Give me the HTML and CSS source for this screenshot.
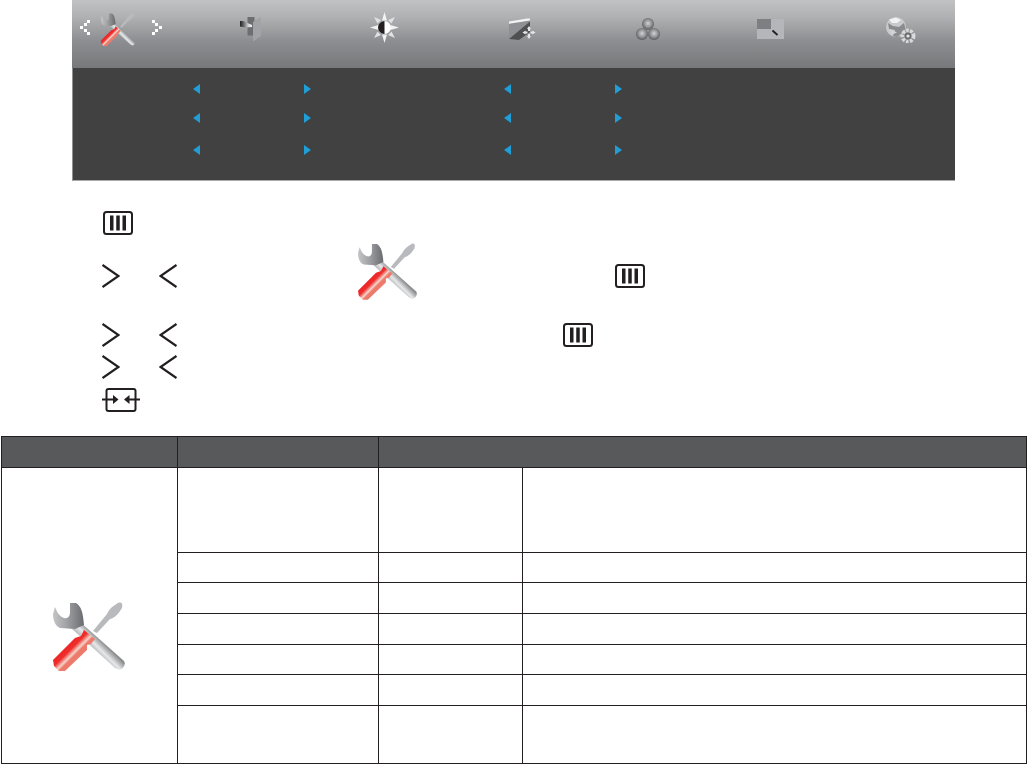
FILE: index.html
```html
<!DOCTYPE html>
<html lang="en">
<head>
  <meta charset="UTF-8">
  <meta name="viewport" content="width=device-width, initial-scale=1.0">
  <title>OSD Setup</title>
  <link rel="stylesheet" href="styles.css">
</head>
<body>
  <!-- shared icons -->
  <svg class="icon-defs" aria-hidden="true">
    <defs>
      <linearGradient id="wrench-head" gradientUnits="userSpaceOnUse" x1="0" y1="12" x2="30" y2="12">
        <stop offset="0" stop-color="#c4c5c7"/>
        <stop offset="0.45" stop-color="#a0a2a5"/>
        <stop offset="1" stop-color="#6d6e71"/>
      </linearGradient>
      <linearGradient id="wrench-bar" gradientUnits="userSpaceOnUse" x1="36" y1="46" x2="46" y2="36">
        <stop offset="0" stop-color="#a7a9ac"/>
        <stop offset="0.5" stop-color="#e6e7e8"/>
        <stop offset="1" stop-color="#8a8c8e"/>
      </linearGradient>
      <linearGradient id="handle-red" gradientUnits="userSpaceOnUse" x1="12" y1="41" x2="23" y2="52">
        <stop offset="0" stop-color="#ed1c24"/>
        <stop offset="0.55" stop-color="#ef2f2c"/>
        <stop offset="0.85" stop-color="#f2d6cc"/>
        <stop offset="1" stop-color="#ee7a6c"/>
      </linearGradient>
      <linearGradient id="door-wedge" x1="0" y1="0" x2="1" y2="0">
        <stop offset="0" stop-color="#231f20"/>
        <stop offset="0.25" stop-color="#58595b"/>
        <stop offset="0.7" stop-color="#d1d3d4"/>
        <stop offset="1" stop-color="#f7f7f7"/>
      </linearGradient>
      <radialGradient id="ball" cx="0.5" cy="0.45" r="0.55">
        <stop offset="0" stop-color="#d1d3d4"/>
        <stop offset="0.55" stop-color="#939598"/>
        <stop offset="1" stop-color="#58595b"/>
      </radialGradient>
      <symbol id="tool" viewBox="0 0 72 69">
        <path fill="#b9babd" d="M40 29 L54 12 C56 7 61 3 66 .5 C69 0 70 2 69 6 C66 11 62 16 57 17 L44 31 Z"/>
        <path fill="url(#wrench-bar)" d="M26 19 L71 59 C73 62 71 66 67 68 L62 66 L18 26 Z"/>
        <path fill="url(#wrench-head)" d="M2 5 C4 10 6 14 11 16 C15 17 17 14 17 10 L17 1 L23 1 C28 4 30 10 31 23 L22 27 L7 26 C2 24 0 18 0 12 Z"/>
        <path fill="url(#handle-red)" d="M31 28 L42 37 L38 42 L34 43 L34 48 L12 69 L6 69 L1 64 L0 58 L22 36 L28 34 Z"/>
      </symbol>
      <symbol id="key-menu" viewBox="0 0 30 24">
        <rect x="1" y="1" width="28" height="22" rx="2.5" fill="none" stroke="#231f20" stroke-width="2"/>
        <path fill="#231f20" d="M7 4.500h3.500v15H7zM13.250 4.500h3.500v15h-3.500zM19.500 4.500H23v15h-3.500z"/>
      </symbol>
      <symbol id="key-right" viewBox="0 0 18 24">
        <path d="M0.500 1 L16.500 12 L0.500 23" fill="none" stroke="#231f20" stroke-width="2.200"/>
      </symbol>
      <symbol id="key-left" viewBox="0 0 18 24">
        <path d="M17.500 1 L1.500 12 L17.500 23" fill="none" stroke="#231f20" stroke-width="2.200"/>
      </symbol>
    </defs>
  </svg>

  <section class="osd">
    <div class="osd-tabs">
      <svg class="nav-dots" viewBox="0 0 10 15"><path fill="#fff" d="M7 0h3v3H7zM4 3h3v3H4zM0 6h3v3H0zM4 9h3v3H4zM7 12h3v3H7z"/></svg>
      <svg class="tab-tool"><use href="#tool"/></svg>
      <svg class="nav-dots nav-next" viewBox="0 0 10 15"><path fill="#fff" d="M0 0h3v3H0zM3 3h3v3H3zM7 6h3v3H7zM3 9h3v3H3zM0 12h3v3H0z"/></svg>

      <svg class="tab-door" viewBox="0 0 21 25">
        <rect x="7.500" y="0" width="7" height="18.500" fill="#6d6e71"/>
        <path fill="#a2a3a6" d="M13 5 L21 0 V19 L13 24.500 Z"/>
        <path fill="url(#door-wedge)" d="M0 4 L3 4 L12 8 L12 10 L5 10.500 L0 9.500 Z"/>
      </svg>

      <svg class="tab-sun" viewBox="0 0 30 31">
        <path fill="#f1f2f2" d="M14.500 0 L17 8.500 H12 Z M14.500 31 L12 22.500 H17 Z M0 15.500 L8.500 13 V18 Z M29 15.500 L20.500 18 V13 Z"/>
        <path fill="#e0e1e2" d="M4 5 L11 8 L7.500 11.500 Z M25 5 L21.500 11.500 L18 8 Z M4 26 L7.500 19.500 L11 23 Z M25 26 L18 23 L21.500 19.500 Z"/>
        <circle cx="14.500" cy="15.500" r="6.500" fill="#fff"/>
        <path fill="#231f20" d="M14.500 9 A6.500 6.500 0 0 0 14.500 22 Z"/>
      </svg>

      <svg class="tab-image" viewBox="0 0 27 23">
        <path fill="#8f9093" d="M0 5.500 L21 2 V14 L10 22 L0 21 Z"/>
        <path fill="#f1f2f2" d="M0 3.500 L18 0.500 H21 V2.500 L0 5.700 Z"/>
        <path fill="#4f5052" d="M0 21 L21 3.500 V14 L10 22 Z"/>
        <path fill="#e6e7e8" d="M20 8 L22 11 H21 V13 H18.999 V11 H18 Z M20 21 L18 18 H19 V16 H21 V18 H22 Z M13.500 14.500 L16.500 12.500 V13.500 H18.500 V15.500 H16.500 V16.500 Z M26.500 14.500 L23.500 16.500 V15.500 H21.500 V13.500 H23.500 V12.500 Z"/>
      </svg>

      <svg class="tab-balls" viewBox="0 0 24 22">
        <circle cx="12" cy="6" r="6" fill="url(#ball)"/>
        <circle cx="6" cy="16" r="6" fill="url(#ball)"/>
        <circle cx="18" cy="16" r="6" fill="url(#ball)"/>
      </svg>

      <svg class="tab-box" viewBox="0 0 27 20">
        <rect width="27" height="20" fill="#b5b6b9"/>
        <rect width="14" height="10" fill="#7e7f82"/>
        <path stroke="#231f20" stroke-width="1.800" d="M15.500 11.500 L20.500 16"/>
      </svg>

      <svg class="tab-globe" viewBox="0 0 30 26">
        <circle cx="10" cy="10" r="10" fill="#c9cacc"/>
        <path fill="#f1f2f2" d="M3 2.500 L10 0.500 L15 3 L11 6 L6 6 Z"/>
        <path fill="#8a8b8e" d="M2 6 L7 9 L13 10 L18 6 L19.500 12 L15 17 L11 20 L7 19 L9 13 L3 12 Z"/>
        <path fill="#d1d3d4" d="M4 12 L11 15.500 L5 18 Z"/>
        <circle cx="22" cy="19" r="5.500" fill="none" stroke="#d8d9da" stroke-width="4" stroke-dasharray="2.600 1.300"/>
        <circle cx="22" cy="19" r="3.400" fill="#6d6e71"/>
        <circle cx="22" cy="19" r="1.600" fill="#e6e7e8"/>
      </svg>
    </div>

    <div class="osd-body">
      <div class="arrow-row">
        <span class="arrow arrow-left"></span><span class="arrow arrow-right"></span>
        <span class="arrow arrow-left arrow-far"></span><span class="arrow arrow-right"></span>
      </div>
      <div class="arrow-row">
        <span class="arrow arrow-left"></span><span class="arrow arrow-right"></span>
        <span class="arrow arrow-left arrow-far"></span><span class="arrow arrow-right"></span>
      </div>
      <div class="arrow-row">
        <span class="arrow arrow-left"></span><span class="arrow arrow-right"></span>
        <span class="arrow arrow-left arrow-far"></span><span class="arrow arrow-right"></span>
      </div>
    </div>
  </section>

  <ol class="steps">
    <li class="step step-menu">
      <svg class="key-menu"><use href="#key-menu"/></svg>
    </li>
    <li class="step step-pick">
      <svg class="key-arrow"><use href="#key-right"/></svg>
      <svg class="key-arrow key-second"><use href="#key-left"/></svg>
      <svg class="step-tool"><use href="#tool"/></svg>
      <svg class="key-menu key-after-tool"><use href="#key-menu"/></svg>
    </li>
    <li class="step step-adjust">
      <svg class="key-arrow"><use href="#key-right"/></svg>
      <svg class="key-arrow key-second"><use href="#key-left"/></svg>
      <svg class="key-menu key-after-arrows"><use href="#key-menu"/></svg>
    </li>
    <li class="step step-value">
      <svg class="key-arrow"><use href="#key-right"/></svg>
      <svg class="key-arrow key-second"><use href="#key-left"/></svg>
    </li>
    <li class="step step-exit">
      <svg class="key-source" viewBox="0 0 38 24">
        <rect x="4.500" y="1" width="29" height="22" rx="2" fill="none" stroke="#231f20" stroke-width="2"/>
        <path stroke="#231f20" stroke-width="2" d="M0 11.500 H11 M27 11.500 H38"/>
        <path fill="#231f20" d="M11 7 L16.500 11.500 L11 16 Z M27.500 7 L22 11.500 L27.500 16 Z"/>
      </svg>
    </li>
  </ol>

  <table class="spec">
    <colgroup>
      <col class="col-icon">
      <col class="col-item">
      <col class="col-value">
      <col>
    </colgroup>
    <tr class="row-head"><th></th><th></th><th colspan="2"></th></tr>
    <tr class="row-tall">
      <td rowspan="7" class="cell-icon"><svg class="table-tool"><use href="#tool"/></svg></td>
      <td></td><td></td><td></td>
    </tr>
    <tr class="row-30"><td></td><td></td><td></td></tr>
    <tr class="row-31"><td></td><td></td><td></td></tr>
    <tr class="row-31"><td></td><td></td><td></td></tr>
    <tr class="row-30"><td></td><td></td><td></td></tr>
    <tr class="row-31"><td></td><td></td><td></td></tr>
    <tr class="row-last"><td></td><td></td><td></td></tr>
  </table>
</body>
</html>
```

FILE: styles.css
```css
html, body {
  height: 100%;
}
body {
  margin: 0;
  background-color: #fff;
  font-family: "Liberation Sans", Arial, sans-serif;
  overflow: hidden;
}
svg {
  display: block;
  flex: none;
}
.icon-defs {
  width: 0;
  height: 0;
}

/* OSD panel */
.osd {
  width: 883px;
  margin-left: 72px;
}
.osd-tabs {
  display: flex;
  align-items: flex-start;
  height: 68px;
  background: linear-gradient(#c1c2c4 0%, #b0b1b3 25%, #8d8e91 60%, #77787a 100%);
}
.nav-dots {
  width: 10px;
  height: 15px;
  margin: 20px 0 0 8px;
}
.nav-next {
  margin-left: 16px;
}
.tab-tool {
  width: 36px;
  height: 33px;
  margin: 13px 0 0 10px;
}
.tab-door {
  width: 21px;
  height: 25px;
  margin: 17px 0 0 78px;
}
.tab-sun {
  width: 30px;
  height: 31px;
  margin: 12px 0 0 109px;
}
.tab-image {
  width: 27px;
  height: 23px;
  margin: 18px 0 0 109px;
}
.tab-balls {
  width: 24px;
  height: 22px;
  margin: 18px 0 0 100px;
}
.tab-box {
  width: 27px;
  height: 20px;
  margin: 19px 0 0 97px;
}
.tab-globe {
  width: 30px;
  height: 26px;
  margin: 17px 0 0 102px;
}
.osd-body {
  height: 113px;
  box-sizing: border-box;
  padding-top: 16px;
  background-color: #414141;
  border-left: 1px solid #8f9092;
  border-bottom: 1px solid #a7a9ac;
}
.arrow-row {
  display: flex;
  height: 10px;
  margin-bottom: 19px;
}
.arrow-row:last-child {
  margin-top: 22px;
  margin-bottom: 0;
}
.arrow {
  width: 0;
  height: 0;
  border-top: 5px solid transparent;
  border-bottom: 5px solid transparent;
}
.arrow-left {
  margin-left: 120px;
  border-right: 7px solid #1f9ed8;
}
.arrow-right {
  margin-left: 104px;
  border-left: 7px solid #1f9ed8;
}
.arrow-left.arrow-far {
  margin-left: 193px;
}

/* key instructions */
.steps {
  list-style: none;
  margin: 0;
  padding: 30px 0 24px 102px;
}
.step {
  display: flex;
  align-items: flex-start;
}
.step-pick {
  height: 57px;
  margin-top: 8px;
}
.step-adjust {
  margin-top: 23px;
}
.step-value {
  margin-top: 8px;
}
.step-exit {
  margin-top: 9px;
}
.key-menu {
  width: 30px;
  height: 24px;
  margin-left: 1px;
}
.key-arrow {
  width: 18px;
  height: 24px;
}
.step-pick .key-arrow,
.step-pick .key-menu {
  margin-top: 21px;
}
.key-second {
  margin-left: 39px;
}
.step-tool {
  width: 59px;
  height: 57px;
  margin-left: 181px;
}
.key-after-tool {
  margin-left: 198px;
}
.key-after-arrows {
  margin-left: 386px;
}
.key-source {
  width: 38px;
  height: 24px;
}

/* settings table */
.spec {
  width: 1026px;
  margin-left: 1px;
  table-layout: fixed;
  border-collapse: collapse;
}
.spec th,
.spec td {
  padding: 0;
  border: 1px solid #231f20;
}
.spec th {
  background-color: #58595b;
}
.col-icon {
  width: 176px;
}
.col-item {
  width: 201px;
}
.col-value {
  width: 144px;
}
.row-head {
  height: 31px;
}
.row-tall {
  height: 85px;
}
.row-30 {
  height: 30px;
}
.row-31 {
  height: 31px;
}
.row-last {
  height: 58px;
}
.cell-icon {
  vertical-align: top;
}
.table-tool {
  width: 72px;
  height: 69px;
  margin: 134px 0 0 51px;
}
```
